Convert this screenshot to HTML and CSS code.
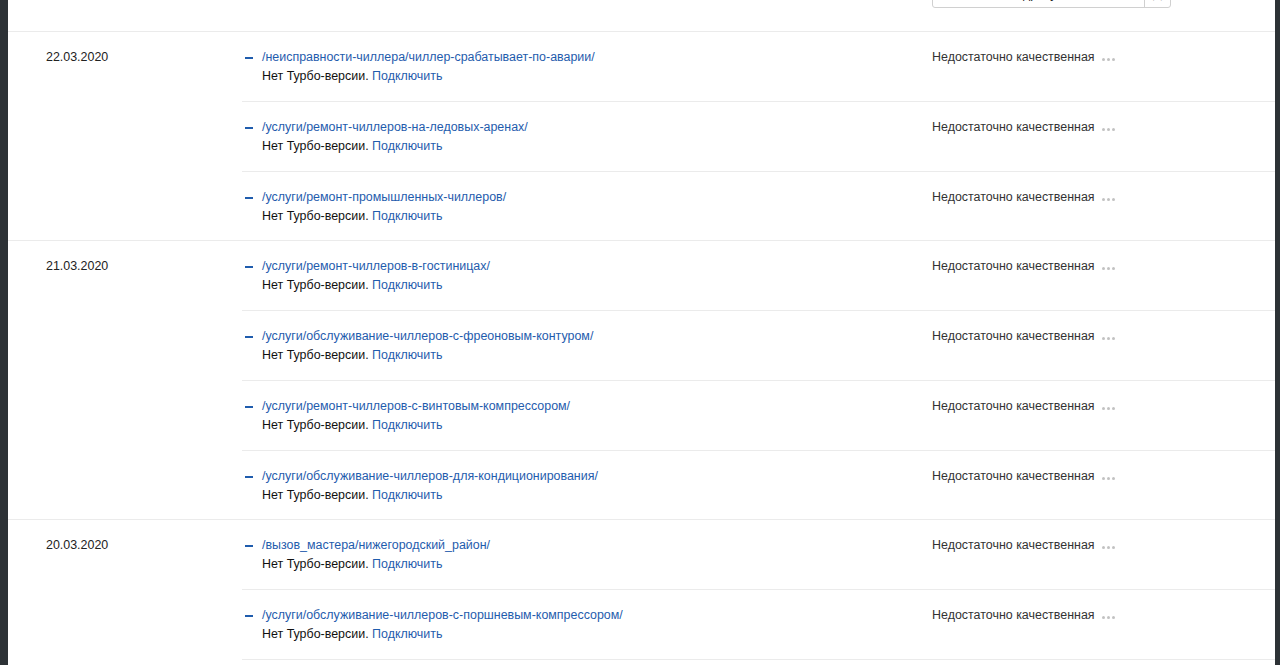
FILE: index.html
```html
<!DOCTYPE html>
<html lang="ru">
<head>
<meta charset="UTF-8">
<meta name="viewport" content="width=device-width, initial-scale=1.0">
<title>Страницы в поиске</title>
<link rel="stylesheet" href="styles.css">
</head>
<body>
<div class="page">
  <div class="head">
    <div class="search">
      <input type="text" class="search-input" value="Найти по адресу">
      <button class="search-clear">×</button>
    </div>
  </div>

  <div class="group">
    <div class="date">22.03.2020</div>
    <div class="rows">
      <div class="row">
        <div class="url">
          <span class="toggle"></span>
          <div>
            <a href="#">/неисправности-чиллера/чиллер-срабатывает-по-аварии/</a>
            <div class="turbo">Нет Турбо-версии. <a href="#">Подключить</a></div>
          </div>
        </div>
        <div class="status">Недостаточно качественная <span class="more"><i></i><i></i><i></i></span></div>
      </div>
      <div class="row">
        <div class="url">
          <span class="toggle"></span>
          <div>
            <a href="#">/услуги/ремонт-чиллеров-на-ледовых-аренах/</a>
            <div class="turbo">Нет Турбо-версии. <a href="#">Подключить</a></div>
          </div>
        </div>
        <div class="status">Недостаточно качественная <span class="more"><i></i><i></i><i></i></span></div>
      </div>
      <div class="row">
        <div class="url">
          <span class="toggle"></span>
          <div>
            <a href="#">/услуги/ремонт-промышленных-чиллеров/</a>
            <div class="turbo">Нет Турбо-версии. <a href="#">Подключить</a></div>
          </div>
        </div>
        <div class="status">Недостаточно качественная <span class="more"><i></i><i></i><i></i></span></div>
      </div>
    </div>
  </div>

  <div class="group">
    <div class="date">21.03.2020</div>
    <div class="rows">
      <div class="row">
        <div class="url">
          <span class="toggle"></span>
          <div>
            <a href="#">/услуги/ремонт-чиллеров-в-гостиницах/</a>
            <div class="turbo">Нет Турбо-версии. <a href="#">Подключить</a></div>
          </div>
        </div>
        <div class="status">Недостаточно качественная <span class="more"><i></i><i></i><i></i></span></div>
      </div>
      <div class="row">
        <div class="url">
          <span class="toggle"></span>
          <div>
            <a href="#">/услуги/обслуживание-чиллеров-с-фреоновым-контуром/</a>
            <div class="turbo">Нет Турбо-версии. <a href="#">Подключить</a></div>
          </div>
        </div>
        <div class="status">Недостаточно качественная <span class="more"><i></i><i></i><i></i></span></div>
      </div>
      <div class="row">
        <div class="url">
          <span class="toggle"></span>
          <div>
            <a href="#">/услуги/ремонт-чиллеров-с-винтовым-компрессором/</a>
            <div class="turbo">Нет Турбо-версии. <a href="#">Подключить</a></div>
          </div>
        </div>
        <div class="status">Недостаточно качественная <span class="more"><i></i><i></i><i></i></span></div>
      </div>
      <div class="row">
        <div class="url">
          <span class="toggle"></span>
          <div>
            <a href="#">/услуги/обслуживание-чиллеров-для-кондиционирования/</a>
            <div class="turbo">Нет Турбо-версии. <a href="#">Подключить</a></div>
          </div>
        </div>
        <div class="status">Недостаточно качественная <span class="more"><i></i><i></i><i></i></span></div>
      </div>
    </div>
  </div>

  <div class="group">
    <div class="date">20.03.2020</div>
    <div class="rows">
      <div class="row">
        <div class="url">
          <span class="toggle"></span>
          <div>
            <a href="#">/вызов_мастера/нижегородский_район/</a>
            <div class="turbo">Нет Турбо-версии. <a href="#">Подключить</a></div>
          </div>
        </div>
        <div class="status">Недостаточно качественная <span class="more"><i></i><i></i><i></i></span></div>
      </div>
      <div class="row">
        <div class="url">
          <span class="toggle"></span>
          <div>
            <a href="#">/услуги/обслуживание-чиллеров-с-поршневым-компрессором/</a>
            <div class="turbo">Нет Турбо-версии. <a href="#">Подключить</a></div>
          </div>
        </div>
        <div class="status">Недостаточно качественная <span class="more"><i></i><i></i><i></i></span></div>
      </div>
      <div class="row"></div>
    </div>
  </div>
</div>
</body>
</html>
```

FILE: styles.css
```css
html, body {
  margin: 0;
  padding: 0;
  height: 665px;
  overflow: hidden;
}
body {
  font-family: "Liberation Sans", Arial, sans-serif;
  font-size: 12.45px;
  line-height: 19px;
  color: #222222;
  background-color: #2d3236;
}
.page {
  margin: 0 5px 0 8px;
  background-color: #ffffff;
  min-height: 665px;
}
a {
  color: #1f5cad;
  text-decoration: none;
}

/* шапка с поиском */
.head {
  height: 31px;
  border-bottom: 1px solid #ebebeb;
  display: flex;
  justify-content: flex-end;
  padding-right: 104px;
}
.search {
  display: flex;
  height: 28px;
  margin-top: -20px;
  border: 1px solid #d0d0d0;
  border-radius: 3px;
  box-sizing: border-box;
  width: 239px;
}
.search-input {
  flex: 1;
  border: none;
  padding: 0 27px;
  font: inherit;
  color: #222222;
  min-width: 0;
  background: transparent;
}
.search-clear {
  width: 26px;
  border: none;
  border-left: 1px solid #d0d0d0;
  background: transparent;
  font-size: 22px;
  line-height: 30px;
  color: #444444;
  padding: 0;
}

/* группы по датам */
.group {
  display: flex;
  border-bottom: 1px solid #ebebeb;
}
.date {
  width: 196px;
  padding: 16px 0 0 38px;
  color: #222222;
}
.rows {
  flex: 1;
}
.row {
  display: flex;
  height: 70px;
  box-sizing: border-box;
  padding-top: 16px;
  border-bottom: 1px solid #ebebeb;
}
.row:last-child {
  height: 68px;
  border-bottom: none;
}
.url {
  width: 690px;
  display: flex;
  padding-left: 3px;
  box-sizing: border-box;
}
.toggle {
  width: 8px;
  height: 2px;
  background-color: #1f5cad;
  margin: 9px 9px 0 0;
  flex-shrink: 0;
}
.turbo {
  color: #111111;
}
.status {
  color: #333333;
  display: flex;
  align-items: flex-start;
}
.more {
  display: inline-flex;
  gap: 2px;
  margin: 10px 0 0 7px;
}
.more i {
  width: 3px;
  height: 3px;
  border-radius: 50%;
  background-color: #c2c2c2;
}
```
